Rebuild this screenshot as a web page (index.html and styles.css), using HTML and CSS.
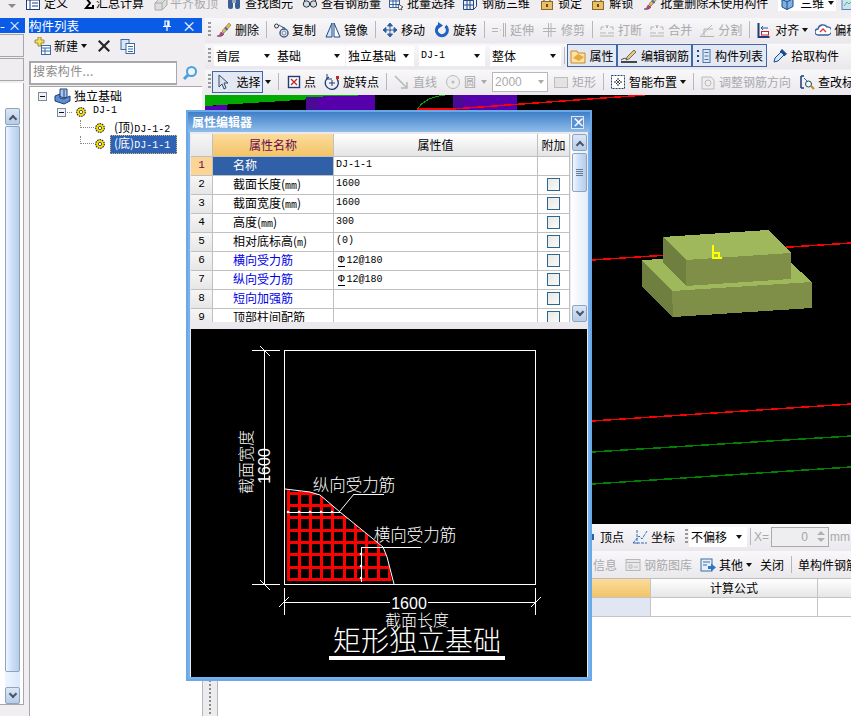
FILE: index.html
```html
<!DOCTYPE html>
<html lang="zh">
<head>
<meta charset="utf-8">
<title>属性编辑器</title>
<link rel="stylesheet" href="styles.css">
</head>
<body>
<svg class="defs" aria-hidden="true">
  <symbol id="i-list" viewBox="0 0 16 16"><rect x="1.5" y="2.5" width="13" height="12" fill="#fff" stroke="#1d3d78"/><path d="M1 5h14M5 3v11M7 8h6M7 11h6" stroke="#1d3d78"/></symbol>
  <symbol id="i-sigma" viewBox="0 0 16 16"><path d="M3 2h9v3M12 3H6l4 5-4 5h7v-3" fill="none" stroke="#000" stroke-width="2"/></symbol>
  <symbol id="i-flat" viewBox="0 0 16 16"><path d="M2 8l5-5h7v7l-5 5H2z" fill="#ddd" stroke="#aaa"/><path d="M2 8h7v7M9 8l5-5" stroke="#aaa" fill="none"/></symbol>
  <symbol id="i-find" viewBox="0 0 16 16"><rect x="2" y="4" width="5" height="10" rx="2" fill="#3a5f95"/><rect x="9" y="4" width="5" height="10" rx="2" fill="#3a5f95"/><rect x="6" y="2" width="4" height="6" fill="#9ab"/></symbol>
  <symbol id="i-glass" viewBox="0 0 16 16"><circle cx="4.5" cy="9" r="3.2" fill="#cde" stroke="#333"/><circle cx="11.5" cy="9" r="3.2" fill="#cde" stroke="#333"/><path d="M8 8h0M2 6l3-3M14 6l-3-3" stroke="#333" fill="none"/></symbol>
  <symbol id="i-batch" viewBox="0 0 16 16"><path d="M1.5 2.5h10v10h-10zM1.5 6h10M1.5 9.500h10M5 2.500v10M8 2.500v10" fill="#fff" stroke="#35619c"/><path d="M10 9l5 3-2 1 1 2-2-1-1 1z" fill="#fff" stroke="#333" stroke-width=".8"/></symbol>
  <symbol id="i-cube3" viewBox="0 0 16 16"><path d="M1.500 5.500h10v9h-10zM1.500 5.500l3-3h10v9l-3 3M11.500 5.500l3-3M5 5.500v9M8 5.500v9M1.500 10h10" fill="none" stroke="#1d4a88"/></symbol>
  <symbol id="i-lock" viewBox="0 0 16 16"><path d="M5 7V4a3 3 0 016 0v3" fill="none" stroke="#777" stroke-width="1.500"/><rect x="2.500" y="6.500" width="11" height="8" fill="#e9c068" stroke="#8c6a24"/><path d="M8 9v3" stroke="#6b4a10" stroke-width="2"/></symbol>
  <symbol id="i-brush" viewBox="0 0 16 16"><path d="M6 9l7-8 2 2-7 8z" fill="#e8b94c" stroke="#8a6a22" stroke-width=".6"/><path d="M9 5.500l2.500 2.500" stroke="#3a6fc0" stroke-width="2"/><path d="M1 14c2 0 3-1 4-4l3 2c-1 2-4 3-7 2z" fill="#c83a8a" stroke="#333" stroke-width=".5"/></symbol>
  <symbol id="i-cube-b" viewBox="0 0 16 16"><path d="M2 4.500l5-3 6 2v8l-6 3-5-2.500z" fill="#7fb2e4" stroke="#1d4a88"/><path d="M2 4.500l5 2.500 6-3.500M7 7v7.500" fill="none" stroke="#1d4a88"/></symbol>
  <symbol id="i-pic" viewBox="0 0 16 16"><rect x="2" y="1.500" width="12" height="13" fill="#cfe0f5" stroke="#5a83b8"/><path d="M4 11l3-4 2 2 3-3" fill="none" stroke="#3c6"/></symbol>
  <symbol id="i-copy" viewBox="0 0 16 16"><circle cx="3.500" cy="4" r="2" fill="none" stroke="#333"/><circle cx="11" cy="11" r="4" fill="none" stroke="#3a5f95" stroke-width="1.500"/><circle cx="11" cy="11" r="2" fill="none" stroke="#888"/><path d="M6 3l5 3M9 5l3 1-1 2" stroke="#3a5f95" fill="none"/></symbol>
  <symbol id="i-mirror" viewBox="0 0 16 16"><path d="M7 1L1 15h6z" fill="#d6e4f5" stroke="#1d4a88"/><path d="M9 1l6 14H9z" fill="#fff" stroke="#1d4a88"/></symbol>
  <symbol id="i-move" viewBox="0 0 16 16"><path d="M8 1v14M1 8h14M8 1L5.500 4h5zM8 15l-2.500-3h5zM1 8l3-2.500v5zM15 8l-3-2.500v5z" fill="#2c5f9e" stroke="#2c5f9e"/></symbol>
  <symbol id="i-rot" viewBox="0 0 16 16"><path d="M11.500 4A5.500 5.500 0 1 1 5 3.500" fill="none" stroke="#1f62c4" stroke-width="3"/><path d="M4 0v7l5-3.500z" fill="#1f62c4"/></symbol>
  <symbol id="i-ext" viewBox="0 0 16 16"><path d="M1 6.500h6M1 9.500h6M9 8h1M12.500 1v14M14.500 1v14" stroke="#b4b4b4" fill="none"/></symbol>
  <symbol id="i-trim" viewBox="0 0 16 16"><path d="M1 6.500h13M1 9.500h13M6.500 1v14M9 1v14" stroke="#b4b4b4" fill="none"/></symbol>
  <symbol id="i-brk" viewBox="0 0 16 16"><path d="M1 11h6M9 11h6M1 14h14M2 8V5h3M11 5h3v3M7 3l1 3 1-3" stroke="#b4b4b4" fill="none"/></symbol>
  <symbol id="i-split" viewBox="0 0 16 16"><path d="M1 14.500h14M1.500 14L13 3M5 14V7h9" stroke="#b4b4b4" fill="#eee"/></symbol>
  <symbol id="i-align" viewBox="0 0 16 16"><path d="M2.500 1v14h11" stroke="#1d3d78" stroke-width="2" fill="none"/><rect x="5.500" y="9.500" width="7" height="3.500" fill="#fff" stroke="#c22"/><path d="M12 6H5l2-2M5 6l2 2" stroke="#1d5aa8" fill="none"/></symbol>
  <symbol id="i-offset" viewBox="0 0 16 16"><path d="M3 13a3 3 0 010-6 5 5 0 019-2 4 4 0 011 8z" fill="#fff" stroke="#2c5f9e" stroke-width="1.300"/><path d="M5 10l3-3 3 3" fill="none" stroke="#d33" stroke-width="1.300"/></symbol>
  <symbol id="i-prop" viewBox="0 0 16 16"><path d="M1 3h6l1 2h7v10H1z" fill="#fbe2a8" stroke="#c98a28"/><path d="M3 10l5-4 6 3-5 4z" fill="#e9a83a"/></symbol>
  <symbol id="i-edit" viewBox="0 0 18 16"><path d="M7 9l7-7 2 2-7 7-3 1z" fill="#e8c878" stroke="#444" stroke-width=".7"/><path d="M1 14h16" stroke="#111" stroke-width="1.500"/><path d="M1 12c3-2 4-2 6-1" fill="none" stroke="#444"/></symbol>
  <symbol id="i-cols" viewBox="0 0 16 16"><path d="M1 3h3M1 8h3M1 13h3" stroke="#1d4a88" stroke-width="2" stroke-dasharray="2 1"/><rect x="7" y="1.500" width="7" height="13" fill="#dce8f6" stroke="#4d76ad"/><path d="M8.500 4.500h4M8.500 8h4M8.500 11.500h4" stroke="#4d76ad"/></symbol>
  <symbol id="i-pick" viewBox="0 0 16 16"><path d="M2 14l1-4 6-6 3 3-6 6z" fill="#cfe3fb" stroke="#1d4a88"/><path d="M8 3l5 5M10 1.500l4.500 4.500-2 1.500L8.500 3.500z" fill="#1d4a88" stroke="#1d4a88"/></symbol>
  <symbol id="i-sel" viewBox="0 0 16 16"><path d="M5 1v12l3-3 2 5 2-1-2-5h4z" fill="#d6e2f0" stroke="#354a6a"/></symbol>
  <symbol id="i-pt" viewBox="0 0 16 16"><rect x="2.500" y="2.500" width="11" height="11" fill="#fff" stroke="#1d3d78" stroke-width="1.400"/><path d="M5 5l6 6M11 5l-6 6" stroke="#c22" stroke-width="1.400"/></symbol>
  <symbol id="i-rotpt" viewBox="0 0 16 16"><path d="M13 5A6.500 6.500 0 1 1 5 3" fill="none" stroke="#1d3d78" stroke-width="1.300"/><path d="M3 0v5h5" fill="none" stroke="#1d3d78"/><path d="M8 6v6M5 9h6" stroke="#1d3d78"/><rect x="12" y="2" width="3" height="3" fill="#c22"/></symbol>
  <symbol id="i-line" viewBox="0 0 16 16"><path d="M1 2l12 12M13 8v6H7" fill="none" stroke="#b8b8b8" stroke-width="1.500"/></symbol>
  <symbol id="i-circ" viewBox="0 0 16 16"><circle cx="8" cy="8" r="6.500" fill="#eee" stroke="#bbb"/><circle cx="8" cy="8" r="1.500" fill="#bbb"/></symbol>
  <symbol id="i-rect" viewBox="0 0 16 16"><rect x="1.500" y="3.500" width="13" height="10" fill="#e3e3e3" stroke="#bdbdbd"/></symbol>
  <symbol id="i-smart" viewBox="0 0 16 16"><rect x="1.500" y="1.500" width="13" height="13" fill="#fff" stroke="#1d3d78" stroke-dasharray="2 1"/><path d="M8 4v8M4 8h8" stroke="#222" stroke-dasharray="2 1"/><path d="M6 6h1v1H6zM9 6h1v1H9zM6 9h1v1H6zM9 9h1v1H9z" fill="#111"/></symbol>
  <symbol id="i-adj" viewBox="0 0 16 16"><path d="M2 3h9l3 3v9H2z" fill="#eee" stroke="#bbb"/><circle cx="8" cy="9" r="3" fill="none" stroke="#bbb"/></symbol>
  <symbol id="i-chk" viewBox="0 0 16 16"><path d="M2 2v12M2 2h3M2 14h3" stroke="#1d3d78" stroke-width="1.500" fill="none"/><path d="M5 4l4 4" stroke="#2c5f9e"/><circle cx="9.500" cy="10" r="3" fill="#dff" stroke="#345"/><path d="M12 12l3 3" stroke="#c08a2a" stroke-width="2"/></symbol>
  <symbol id="i-coord" viewBox="0 0 16 16"><path d="M1 14h14M5 1v14M1 14l6-7 3 3 5-8" fill="none" stroke="#2c6fc0" stroke-dasharray="3 1"/></symbol>
  <symbol id="i-lib" viewBox="0 0 16 16"><rect x="1" y="2.500" width="14" height="11" fill="#e8e8e8" stroke="#b8b8b8"/><path d="M1 5.500h14M4 8h3v3H4zM9 10h4" stroke="#b8b8b8" fill="none"/></symbol>
  <symbol id="i-other" viewBox="0 0 16 16"><rect x="1" y="2" width="11" height="12" fill="#e6eef8" stroke="#3c6ea8"/><path d="M3 5h7M3 8h4" stroke="#3c6ea8"/><path d="M8 9h3V6.500L16 10.500l-5 4V12H8z" fill="#2f74c8"/></symbol>
  <symbol id="i-gear" viewBox="0 0 12 12"><circle cx="6" cy="6" r="4.300" fill="#ffe800" stroke="#333" stroke-width="1.200" stroke-dasharray="1.600 .8"/><circle cx="6" cy="6" r="1.700" fill="#fff" stroke="#333" stroke-width=".8"/></symbol>
  <symbol id="i-new" viewBox="0 0 18 18"><path d="M2 3h3V0h3v3h3v3H8v3H5V6H2z" fill="#f3df60" stroke="#8a7a20" stroke-width=".8"/><rect x="8.500" y="8.500" width="9" height="9" fill="#fff" stroke="#3a6ba8"/><path d="M8.500 11h9M8.500 14h9M12 11v6" stroke="#3a6ba8"/></symbol>
  <symbol id="i-x" viewBox="0 0 16 16"><path d="M2 2l12 12M14 2L2 14" stroke="#222" stroke-width="2.400"/></symbol>
  <symbol id="i-dup" viewBox="0 0 16 16"><rect x="1" y="1.500" width="8" height="10" fill="#d8e6f6" stroke="#3a6ba8"/><rect x="6" y="5.500" width="8.500" height="10" fill="#fff" stroke="#3a6ba8"/><path d="M8 8.500h5M8 11h5M8 13.500h5" stroke="#3a6ba8"/></symbol>
  <symbol id="i-search" viewBox="0 0 16 16"><circle cx="9.500" cy="6.500" r="4.500" fill="#eaf5fd" stroke="#4ba0dc" stroke-width="2"/><path d="M6 10l-4 4" stroke="#4ba0dc" stroke-width="3"/></symbol>
  <symbol id="i-found" viewBox="0 0 17 17"><path d="M1 8l5-2v4l4 1 6-3v5l-6 3-9-3z" fill="#5c8ed0" stroke="#1d3d78"/><path d="M6 1h7v8l-3 1-4-1.500z" fill="#a9c8ec" stroke="#1d3d78"/><path d="M10 2v8" stroke="#1d3d78"/></symbol>
  <symbol id="i-pin" viewBox="0 0 10 12"><path d="M3 1h4v5H3zM1 6.500h8M5 7v4M5.800 1v5" fill="none" stroke="#fff" stroke-width="1.200"/></symbol>
</svg>

<div class="tb tb-top">
  <span class="top-arrow"></span>
  <div class="t m9"><svg class="ic"><use href="#i-list"/></svg>定义</div>
  <div class="t m12 g0"><svg class="ic"><use href="#i-sigma"/></svg>汇总计算</div>
  <div class="t m9 g1 off"><svg class="ic"><use href="#i-flat"/></svg>平齐板顶</div>
  <div class="t"><svg class="ic"><use href="#i-find"/></svg>查找图元</div>
  <div class="t m9"><svg class="ic"><use href="#i-glass"/></svg>查看钢筋量</div>
  <div class="t m7"><svg class="ic"><use href="#i-batch"/></svg>批量选择</div>
  <div class="t m7 g4"><svg class="ic"><use href="#i-cube3"/></svg>钢筋三维</div>
  <div class="t m9"><svg class="ic"><use href="#i-lock"/></svg>锁定</div>
  <div class="t"><svg class="ic"><use href="#i-lock"/></svg>解锁</div>
  <div class="t m10 g1"><svg class="ic"><use href="#i-brush"/></svg>批量删除未使用构件</div>
  <div class="combo c-3d"><svg class="ic"><use href="#i-cube-b"/></svg><span>三维</span><span class="arrow"></span></div>
  <div class="t m4"><svg class="ic"><use href="#i-pic"/></svg></div>
</div>

<div class="app">
  <aside class="dock">
    <div class="dock-head"><span>-</span><span class="dock-x">×</span></div>
    <div class="dock-cell"></div>
    <div class="dock-cell"></div>
    <div class="dock-body">
      <div class="sb">
        <div class="sb-btn sb-up"><span class="chev"></span></div>
        <div class="sb-thumb"></div>
        <div class="sb-btn sb-down"><span class="chev down"></span></div>
      </div>
    </div>
  </aside>

  <aside class="tree-panel">
    <div class="tree-head"><span>构件列表</span><span class="tree-head-ctl"><svg class="pin"><use href="#i-pin"/></svg><span>×</span></span></div>
    <div class="tree-tools">
      <svg class="ic18"><use href="#i-new"/></svg><span class="tree-new">新建</span><span class="arrow arrow-new"></span>
      <svg class="ic14 tree-del"><use href="#i-x"/></svg>
      <svg class="ic16 tree-dup"><use href="#i-dup"/></svg>
    </div>
    <div class="search"><div class="search-box">搜索构件...</div><svg class="ic16 search-ic"><use href="#i-search"/></svg></div>
    <div class="tree">
      <div class="node n0"><span class="minus"></span><svg class="ic17"><use href="#i-found"/></svg><span class="n-label">独立基础</span></div>
      <div class="node n1"><span class="minus"></span><span class="dots"></span><svg class="ic12"><use href="#i-gear"/></svg><span class="n-label lat">DJ-1</span></div>
      <div class="node n2"><span class="elbow"></span><svg class="ic12"><use href="#i-gear"/></svg><span class="n-label">(顶)<span class="lat">DJ-1-2</span></span></div>
      <div class="node n2"><span class="elbow"></span><svg class="ic12"><use href="#i-gear"/></svg><span class="n-label selected">(底)<span class="lat">DJ-1-1</span></span></div>
    </div>
  </aside>

  <main class="main">
    <div class="tb">
      <span class="grip"></span>
      <div class="t m5"><svg class="ic"><use href="#i-brush"/></svg>删除</div>
      <span class="sep"></span>
      <div class="t m0"><svg class="ic"><use href="#i-copy"/></svg>复制</div>
      <div class="t m9"><svg class="ic"><use href="#i-mirror"/></svg>镜像</div>
      <span class="sep"></span>
      <div class="t m0"><svg class="ic"><use href="#i-move"/></svg>移动</div>
      <div class="t m9"><svg class="ic"><use href="#i-rot"/></svg>旋转</div>
      <span class="sep"></span>
      <div class="t m0 off"><svg class="ic"><use href="#i-ext"/></svg>延伸</div>
      <div class="t off"><svg class="ic"><use href="#i-trim"/></svg>修剪</div>
      <span class="sep"></span>
      <div class="t m0 off"><svg class="ic"><use href="#i-brk"/></svg>打断</div>
      <div class="t m7 off"><svg class="ic"><use href="#i-brk"/></svg>合并</div>
      <div class="t m7 off"><svg class="ic"><use href="#i-split"/></svg>分割</div>
      <span class="sep"></span>
      <div class="t m0"><svg class="ic"><use href="#i-align"/></svg>对齐<span class="arrow"></span></div>
      <div class="t m7"><svg class="ic"><use href="#i-offset"/></svg>偏移</div>
    </div>

    <div class="tb">
      <span class="grip"></span>
      <div class="combo c-1"><span>首层</span><span class="arrow"></span></div>
      <div class="combo c-2"><span>基础</span><span class="arrow"></span></div>
      <div class="combo c-3"><span>独立基础</span><span class="arrow"></span></div>
      <div class="combo c-4"><span class="lat">DJ-1</span><span class="arrow"></span></div>
      <div class="combo c-5"><span>整体</span><span class="arrow"></span></div>
      <span class="sep sep-narrow"></span>
      <div class="toggle tg-1"><svg class="ic"><use href="#i-prop"/></svg>属性</div>
      <div class="toggle tg-2"><svg class="ic18"><use href="#i-edit"/></svg>编辑钢筋</div>
      <div class="toggle tg-2"><svg class="ic"><use href="#i-cols"/></svg>构件列表</div>
      <div class="t m5"><svg class="ic"><use href="#i-pick"/></svg>拾取构件</div>
    </div>

    <div class="tb">
      <span class="grip"></span>
      <div class="toggle tg-sel"><svg class="ic"><use href="#i-sel"/></svg>选择</div>
      <span class="arrow arrow-sel"></span>
      <span class="sep"></span>
      <div class="t m1 g2"><svg class="ic"><use href="#i-pt"/></svg>点</div>
      <div class="t"><svg class="ic"><use href="#i-rotpt"/></svg>旋转点</div>
      <span class="sep"></span>
      <div class="t m1 off"><svg class="ic"><use href="#i-line"/></svg>直线</div>
      <div class="t off"><svg class="ic"><use href="#i-circ"/></svg>圆<span class="arrow arrow-off"></span></div>
      <div class="num-input">2000<span class="arrow arrow-off"></span></div>
      <div class="t m5 off"><svg class="ic"><use href="#i-rect"/></svg>矩形</div>
      <span class="sep"></span>
      <div class="t m0"><svg class="ic"><use href="#i-smart"/></svg>智能布置<span class="arrow"></span></div>
      <span class="sep"></span>
      <div class="t m0 off"><svg class="ic"><use href="#i-adj"/></svg>调整钢筋方向</div>
      <div class="t"><svg class="ic"><use href="#i-chk"/></svg>查改标注</div>
    </div>

    <div class="viewport">
      <svg class="scene" viewBox="0 0 646 429" width="646" height="429" shape-rendering="crispEdges">
        <path d="M0 0H170L0 11Z" fill="#00aa00"/>
        <path d="M0 11L22 10V20H0Z" fill="#5500aa"/>
        <path d="M101 2L170 0V20H101Z" fill="#5500aa"/>
        <path d="M248 0H312V20H248Z" fill="#5500aa"/>
        <path d="M101 2h12V20h-12ZM248 0h11V20h-11Z" fill="#4a0a96"/>
        <path d="M212 14C218 6 228 1 240 0" fill="none" stroke="#00aa00"/>
        <path d="M212 14H248L440 0" fill="none" stroke="#ff0000" stroke-width="1.500"/>
        <path d="M387 165L646 148" stroke="#ff0000" stroke-width="1.500"/>
        <path d="M387 326L646 309" stroke="#ff0000" stroke-width="1.500"/>
        <path d="M387 357L646 341" stroke="#008000" stroke-width="1.500"/>
        <path d="M387 389L646 372" stroke="#008000" stroke-width="1.500"/>
        <path d="M437 165L575 158L607 187L467 196Z" fill="#a0b85c"/>
        <path d="M437 165L467 196L468 222L437 192Z" fill="#6f7f40"/>
        <path d="M467 196L607 187V213L468 222Z" fill="#7f8f47"/>
        <path d="M458 142L563 135L586 158L481 165Z" fill="#a0b85c"/>
        <path d="M458 142L481 165V191L458 168Z" fill="#6f7f40"/>
        <path d="M481 165L586 158V184L481 191Z" fill="#7f8f47"/>
        <path d="M508 150V163H517M508 158H514V163" fill="none" stroke="#ffff00" stroke-width="2"/>
      </svg>
    </div>

    <div class="lower">
      <div class="vsplit"><span class="vsplit-dots"></span></div>
      <div class="lower-main">
        <div class="tb tb-r5">
          <span class="vert-dot"></span>
          <div class="t t-r5">顶点</div>
          <div class="t"><svg class="ic"><use href="#i-coord"/></svg>坐标</div>
          <span class="grip grip-r5"></span>
          <div class="combo c-off"><span>不偏移</span><span class="arrow"></span></div>
          <span class="sep sep-narrow"></span>
          <span class="off x-label">X=</span>
          <div class="spin"><span>0</span><span class="spin-btns"><span class="tri-up"></span><span class="tri-dn"></span></span></div>
          <span class="off mm">mm</span>
        </div>
        <div class="tb tb-r6">
          <div class="t t-r6 off">信息</div>
          <div class="t off"><svg class="ic"><use href="#i-lib"/></svg>钢筋图库</div>
          <div class="t"><svg class="ic"><use href="#i-other"/></svg>其他<span class="arrow"></span></div>
          <div class="t m8">关闭</div>
          <span class="sep"></span>
          <div class="t m0">单构件钢筋量</div>
        </div>
        <div class="calc">
          <div class="calc-row calc-head"><div class="cc cc-a"></div><div class="cc cc-b">计算公式</div><div class="cc cc-c"></div></div>
          <div class="calc-row"><div class="cc cc-a cc-tint"></div><div class="cc cc-b"></div><div class="cc cc-c"></div></div>
        </div>
      </div>
    </div>
  </main>
</div>

<section class="dialog">
  <header class="dlg-title"><span>属性编辑器</span><span class="dlg-close">×</span></header>
  <div class="dlg-grid">
    <div class="grid-clip">
      <div class="props">
        <div class="row row-head"><div class="cell idx"></div><div class="cell th th-name">属性名称</div><div class="cell th">属性值</div><div class="cell th">附加</div></div>
        <div class="row"><div class="cell idx idx-on">1</div><div class="cell nm nm-on">名称</div><div class="cell val lat">DJ-1-1</div><div class="cell"></div></div>
        <div class="row"><div class="cell idx">2</div><div class="cell nm">截面长度(<span class="lat">mm</span>)</div><div class="cell val lat">1600</div><div class="cell ck"><span class="box"></span></div></div>
        <div class="row"><div class="cell idx">3</div><div class="cell nm">截面宽度(<span class="lat">mm</span>)</div><div class="cell val lat">1600</div><div class="cell ck"><span class="box"></span></div></div>
        <div class="row"><div class="cell idx">4</div><div class="cell nm">高度(<span class="lat">mm</span>)</div><div class="cell val lat">300</div><div class="cell ck"><span class="box"></span></div></div>
        <div class="row"><div class="cell idx">5</div><div class="cell nm">相对底标高(<span class="lat">m</span>)</div><div class="cell val lat">(0)</div><div class="cell ck"><span class="box"></span></div></div>
        <div class="row"><div class="cell idx">6</div><div class="cell nm link">横向受力筋</div><div class="cell val lat"><span class="rebar">Φ</span>12@180</div><div class="cell ck"><span class="box"></span></div></div>
        <div class="row"><div class="cell idx">7</div><div class="cell nm link">纵向受力筋</div><div class="cell val lat"><span class="rebar">Φ</span>12@180</div><div class="cell ck"><span class="box"></span></div></div>
        <div class="row"><div class="cell idx">8</div><div class="cell nm link">短向加强筋</div><div class="cell val"></div><div class="cell ck"><span class="box"></span></div></div>
        <div class="row"><div class="cell idx">9</div><div class="cell nm">顶部柱间配筋</div><div class="cell val"></div><div class="cell ck"><span class="box"></span></div></div>
      </div>
    </div>
    <div class="sb sb-dlg">
      <div class="sb-btn sb-up"><span class="chev"></span></div>
      <div class="sb-thumb sb-thumb-dlg"><span class="thumb-grip"></span></div>
      <div class="sb-btn sb-down"><span class="chev down"></span></div>
    </div>
  </div>
  <div class="dlg-drawing">
    <svg class="drawing" viewBox="191 329 396 348" width="396" height="348">
      <defs>
        <clipPath id="clip-found"><path d="M287 490L310 492L320 495L340 512L383 547L387 557L392 582H287Z"/></clipPath>
      </defs>
      <g clip-path="url(#clip-found)" stroke="#ff0000" stroke-width="3" shape-rendering="crispEdges">
        <path d="M288 489V581M299 489V581M310 489V581M321 489V581M332 489V581M344 489V581M355 489V581M366 489V581M378 489V581M389 489V581"/>
        <path d="M287 493H395M287 505H395M287 517H395M287 530H395M287 542H395M287 554H395M287 567H395M287 579H395"/>
      </g>
      <g fill="none" stroke="#fff" shape-rendering="crispEdges">
        <rect x="284.500" y="350.500" width="251" height="234"/>
        <path d="M264.500 350V584M252 350.500H280M252 584.500H280M284 602.500H390M428 602.500H536M284.500 588V615M535.500 588V615"/>
        <path d="M354 494.500H384M361.500 547.500H421M361.500 547V582M287 512.500H340"/>
      </g>
      <g fill="none" stroke="#fff">
        <path d="M260 346L270 356M260 580L270 590M279 607L289 597M531 607L541 597"/>
        <path d="M285 489L310 492L320 495L340 512L383 547L387 557L394 584"/>
        <path d="M354 494L340 511"/>
      </g>
      <g fill="#fff">
        <circle cx="288" cy="512" r="1.300"/><circle cx="299" cy="512" r="1.300"/><circle cx="310" cy="512" r="1.300"/><circle cx="321" cy="512" r="1.300"/><circle cx="332" cy="512" r="1.300"/>
        <circle cx="361" cy="554" r="1.300"/><circle cx="361" cy="566" r="1.300"/><circle cx="361" cy="578" r="1.300"/>
        <rect x="329" y="656" width="176" height="4"/>
      </g>
      <g class="dw-text">
        <text x="354" y="491" class="dw-label">纵向受力筋</text>
        <text x="415" y="541" class="dw-label">横向受力筋</text>
        <text x="409" y="609" class="dw-dim">1600</text>
        <text x="417" y="626" class="dw-cap">截面长度</text>
        <text x="417" y="651" class="dw-title">矩形独立基础</text>
        <text transform="translate(252 462) rotate(-90)" class="dw-cap">截面宽度</text>
        <text transform="translate(270 466) rotate(-90)" class="dw-dim">1600</text>
      </g>
    </svg>
  </div>
</section>
</body>
</html>
```
FILE: styles.css
```css
* { box-sizing: border-box; }
html, body { margin: 0; padding: 0; }
body {
  width: 851px;
  height: 716px;
  overflow: hidden;
  position: relative;
  background: #f0eef1;
  color: #000;
  font: 12px/16px "Noto Sans CJK SC", "Liberation Sans", sans-serif;
}
.defs { position: absolute; width: 0; height: 0; }
.lat { font-family: "Liberation Mono", "Noto Sans CJK SC", monospace; font-size: 10px; }
.off { color: #a9a9ab; }

.ic { width: 16px; height: 16px; flex: none; }
.ic18 { width: 18px; height: 18px; flex: none; }
.ic17 { width: 17px; height: 17px; flex: none; }
.ic16 { width: 16px; height: 16px; flex: none; }
.ic14 { width: 14px; height: 14px; flex: none; }
.ic12 { width: 12px; height: 12px; flex: none; }

.app { display: flex; height: 698px; }

/* Left dock */
.dock { width: 29px; flex: none; display: flex; flex-direction: column; }
.dock-head { width: 25px; height: 15px; background: #0a5ce6; color: #fff; display: flex; justify-content: space-between; padding: 0 4px 0 0; line-height: 14px; font-size: 14px; }
.dock-x { font-size: 13px; }
.dock-cell { width: 24px; height: 23px; border: 1px solid #a8a6a8; border-left: 0; background: #efedf0; margin-top: 1px; }
.dock-body { flex: 1; width: 24px; margin-top: 2px; margin-bottom: 11px; padding: 25px 3px 0 5px; background: #fff; border-right: 1px solid #a8a6a8; border-bottom: 1px solid #a8a6a8; }
.dock-body .sb { height: 100%; }

/* Scrollbars */
.sb { display: flex; flex-direction: column; background: linear-gradient(90deg, #eef5ff, #dbe9fb); }
.sb-btn { height: 17px; flex: none; background: linear-gradient(#dbe7f6, #b6cce6); border: 1px solid #8ea4bf; border-radius: 2px; display: flex; align-items: center; justify-content: center; }
.sb-thumb { flex: 1; margin: 1px 0 15px; background: linear-gradient(90deg, #f0f7ff, #cfe2fa 40%, #b6cde8); border: 1px solid #8ea4bf; border-radius: 2px; }
.chev { width: 6px; height: 6px; border-left: 2px solid #4a5468; border-top: 2px solid #4a5468; transform: translateY(2px) rotate(45deg); }
.chev.down { transform: translateY(-2px) rotate(225deg); }

/* Tree panel */
.tree-panel { width: 173px; flex: none; display: flex; flex-direction: column; }
.tree-head { height: 15px; background: #0a5ce6; color: #fff; display: flex; justify-content: space-between; align-items: center; line-height: 13px; font-size: 12.500px; }
.tree-head-ctl { display: flex; align-items: center; gap: 10px; padding-right: 6px; font-size: 14px; }
.pin { width: 10px; height: 12px; }
.tree-tools { height: 27px; display: flex; align-items: center; padding: 0 0 4px 4px; margin-top: 1px; }
.tree-new { margin-left: 3px; }
.arrow-new { margin-left: 3px; }
.tree-del { margin-left: 10px; }
.tree-dup { margin-left: 9px; }
.search { height: 25px; display: flex; background: #f0eef1; }
.search-box { width: 148px; height: 24px; background: #fff; border: 2px solid #a9a7a9; border-right-width: 1px; color: #8a8a8a; padding: 0 2px; font-size: 12px; letter-spacing: .4px; }
.search-ic { margin: 4px 0 0 5px; }
.tree { flex: 1; background: #fff; border-top: 1px solid #a9a7a9; border-left: 1px solid #a9a7a9; }
.node { height: 16px; display: flex; align-items: center; }
.n0 { padding: 2px 0 0 8px; height: 17px; }
.n1 { padding-left: 27px; }
.n2 { padding-left: 50px; }
.minus { width: 9px; height: 9px; border: 1px solid #7f8a9c; background: #eef1f6; flex: none; position: relative; }
.minus::after { content: ""; position: absolute; left: 1px; right: 1px; top: 3px; height: 1px; background: #111; }
.n0 .minus { margin-right: 7px; }
.n-label { margin-left: 1px; padding: 0 2px 2px; white-space: nowrap; line-height: 14px; }
.n1 .n-label { margin-left: 4px; }
.n2 .n-label { margin-left: 6px; padding: 0 2px 1px; line-height: 15px; }
.dots { width: 5px; border-top: 1px dotted #888; margin: 0 3px 0 1px; }
.elbow { width: 14px; height: 8px; border-left: 1px dotted #888; border-bottom: 1px dotted #888; margin-top: -8px; }
.n2 .n-label.selected { background: #2e62b5; color: #fff; outline: 1px dotted #d8b860; outline-offset: -1px; width: 67px; margin-left: 4px; padding-left: 4px; }

/* Main column */
.main { width: 649px; flex: none; display: flex; flex-direction: column; padding-left: 3px; background: #f0eef1; overflow: hidden; }
.tb { display: flex; align-items: center; height: 25px; flex: none; background: linear-gradient(#f8f7f9, #eae8ec); white-space: nowrap; margin-bottom: 1px; padding: 0 0 2px 2px; }
.tb-top { height: 17px; margin: 0 0 1px; padding: 0 0 6px 0; align-items: flex-end; overflow: hidden; background: #f0eef1; }
.top-arrow { width: 0; height: 0; margin: 0 0 3px 8px; border: 4px solid transparent; border-top: 4px solid #8a8a8a; border-bottom: 0; }
.t { display: flex; align-items: center; gap: 3px; margin-left: 8px; flex: none; }
.t .arrow { margin-left: 0; }
.m0 { margin-left: 0; } .m1 { margin-left: 1px; } .m4 { margin-left: 4px; } .m5 { margin-left: 5px; }
.m7 { margin-left: 7px; } .m8 { margin-left: 8px; } .m9 { margin-left: 9px; } .m10 { margin-left: 10px; } .m12 { margin-left: 12px; }
.g0 { gap: 0; } .g1 { gap: 1px; } .g2 { gap: 2px; } .g4 { gap: 4px; }
.grip { width: 3px; height: 16px; margin-left: 1px; flex: none; background: repeating-linear-gradient(#9a9a9a 0 2px, transparent 2px 4px); }
.sep { width: 1px; height: 17px; background: #b9b7bb; margin: 0 6px 0 7px; flex: none; }
.sep-narrow { margin: 0 2px 0 3px; }
.arrow { width: 0; height: 0; border: 3px solid transparent; border-top: 4px solid #111; border-bottom: 0; margin-left: 3px; flex: none; }
.arrow-off { border-top-color: #aaa; }
.t .arrow-off { margin-left: 2px; }
.arrow-sel { margin-left: 2px; }
.combo { height: 20px; display: flex; align-items: center; justify-content: space-between; background: #fff; padding: 0 2px; flex: none; }
.combo .arrow { margin: 0 3px 0 0; }
.c-1 { width: 61px; margin-left: 3px; }
.c-2 { width: 70px; }
.c-3 { width: 68px; margin-left: 1px; }
.c-4 { width: 66px; margin-left: 5px; }
.c-5 { width: 71px; margin-left: 5px; }
.c-3d { width: 58px; margin-left: 10px; gap: 4px; height: 16px; }
.c-off { width: 58px; margin-left: 1px; }
.toggle { height: 23px; display: flex; align-items: center; justify-content: center; gap: 3px; border: 1px solid #3f68a8; background: #e3e8f2; flex: none; }
.tg-1 { width: 50px; }
.tg-2 { width: 75px; }
.tg-sel { width: 51px; margin-left: 1px; height: 22px; gap: 6px; }
.num-input { width: 56px; height: 20px; margin-left: 5px; border: 1px solid #b8b8b8; background: #fff; color: #aaa; padding-left: 2px; display: flex; align-items: center; justify-content: space-between; flex: none; font-family: "Liberation Sans", sans-serif; }
.num-input .arrow { margin-right: 3px; }

/* Viewport */
.viewport { height: 429px; flex: none; background: #000; overflow: hidden; margin-top: -1px; }
.scene { display: block; }

/* Lower panel */
.lower { flex: 1; display: flex; background: #fff; min-height: 0; margin-left: -3px; }
.vsplit { width: 16px; flex: none; background: #ecebee; border-left: 1px solid #b8b6ba; border-right: 1px solid #b8b6ba; display: flex; justify-content: center; }
.vsplit-dots { width: 2px; background: repeating-linear-gradient(#8a8a8a 0 2px, transparent 2px 4px); }
.lower-main { flex: 1; min-width: 0; overflow: hidden; }
.tb-r5 { height: 27px; margin-bottom: 0; padding-left: 0; }
.vert-dot { width: 2px; height: 6px; margin-left: 374px; background: #2c5f9e; flex: none; }
.t-r5 { margin-left: 6px; }
.grip-r5 { margin-left: 10px; }
.x-label { margin-left: 1px; font-family: "Liberation Sans", sans-serif; }
.mm { margin-left: 1px; font-family: "Liberation Sans", sans-serif; }
.spin { width: 58px; height: 20px; border: 1px solid #aaa; margin-left: 2px; background: #eeedf0; color: #a5a5a5; display: flex; align-items: center; justify-content: flex-end; gap: 9px; padding-right: 3px; font-family: "Liberation Sans", sans-serif; flex: none; }
.spin-btns { display: flex; flex-direction: column; gap: 3px; }
.tri-up, .tri-dn { width: 0; height: 0; border: 4px solid transparent; }
.tri-up { border-bottom: 4px solid #b0b0b0; border-top: 0; }
.tri-dn { border-top: 4px solid #b0b0b0; border-bottom: 0; }
.tb-r6 { height: 28px; margin-bottom: 0; padding: 0; border-bottom: 1px solid #bdbdbd; }
.t-r6 { margin-left: 375px; }
.calc-row { display: flex; height: 19px; border-bottom: 1px solid #c4c4c4; }
.calc-head .cc-a { background: linear-gradient(#fbdc9c, #f3c468); }
.calc-head .cc-b, .calc-head .cc-c { background: linear-gradient(#fff, #e6e6e8); }
.cc { border-right: 1px solid #c4c4c4; text-align: center; line-height: 18px; }
.cc-a { width: 433px; flex: none; }
.cc-b { width: 167px; flex: none; }
.cc-c { flex: 1; border-right: 0; }
.cc-tint { background: #e0e6f2; }

/* Floating dialog */
.dialog { position: absolute; left: 186px; top: 110px; width: 406px; height: 571px; background: #ece9ee; border: 2px solid #6aa8e8; box-shadow: inset 0 0 0 2px #78b0ec; display: flex; flex-direction: column; padding: 0 3px 4px; }
.dlg-title { height: 20px; margin: 0 -3px; padding: 0 6px 0 4px; background: linear-gradient(#3f7fc8, #8fbdea); color: #fff; font-weight: 700; display: flex; justify-content: space-between; align-items: center; flex: none; }
.dlg-close { width: 13px; height: 13px; background: #5a90d0; border: 1px solid #dce8f6; line-height: 10px; text-align: center; font-size: 13px; }
.dlg-grid { display: flex; height: 195px; margin-top: 2px; background: #ece9ee; flex: none; }
.grid-clip { width: 379px; height: 188px; overflow: hidden; flex: none; background: #fff; }
.props { width: 379px; }
.row { display: grid; grid-template-columns: 22px 121px 204px 32px; height: 19px; }
.row-head { height: 23px; }
.cell { border-right: 1px solid #c0c0c0; border-bottom: 1px solid #c0c0c0; white-space: nowrap; overflow: hidden; line-height: 16px; }
.th { text-align: center; background: linear-gradient(#fff, #e4e4e6); line-height: 21px; }
.th-name { background: linear-gradient(#fbdc9c, #f3c468); color: #6a0a50; }
.idx { text-align: center; background: linear-gradient(#f6f6f6, #e6e6e6); font-family: "Liberation Mono", monospace; font-size: 11px; }
.idx-on { background: #fad596; color: #6a0a50; }
.nm { padding-left: 20px; }
.nm-on { background: #3060a8; color: #fff; }
.link { color: #0000e6; }
.val { padding-left: 2px; }
.rebar { border-bottom: 1px solid #000; margin: 0 2px; font-size: 11px; }
.ck { padding-top: 2px; }
.box { display: block; width: 13px; height: 13px; margin: 0 auto; border: 1px solid #2f6690; background: linear-gradient(135deg, #e8e8e4, #fafafa); }
.sb-dlg { flex: 1; padding-left: 1px; margin-left: 1px; background: linear-gradient(90deg, #fff, #e4eefb); height: 188px; }
.sb-thumb-dlg { flex: none; height: 39px; margin: 2px 0 113px; display: flex; align-items: center; justify-content: center; }
.thumb-grip { width: 7px; height: 7px; background: repeating-linear-gradient(#6a7a90 0 1px, transparent 1px 2px); }
.dlg-drawing { height: 348px; background: #000; flex: none; }
.drawing { display: block; }
.dw-text text { fill: #fff; text-anchor: middle; font-family: "Noto Sans CJK SC", "Liberation Sans", sans-serif; font-weight: 300; }
.dw-label { font-size: 16.500px; }
.dw-text .dw-dim { font-size: 16px; font-family: "Liberation Sans", sans-serif; }
.dw-cap { font-size: 16px; }
.dw-title { font-size: 28px; }
```
